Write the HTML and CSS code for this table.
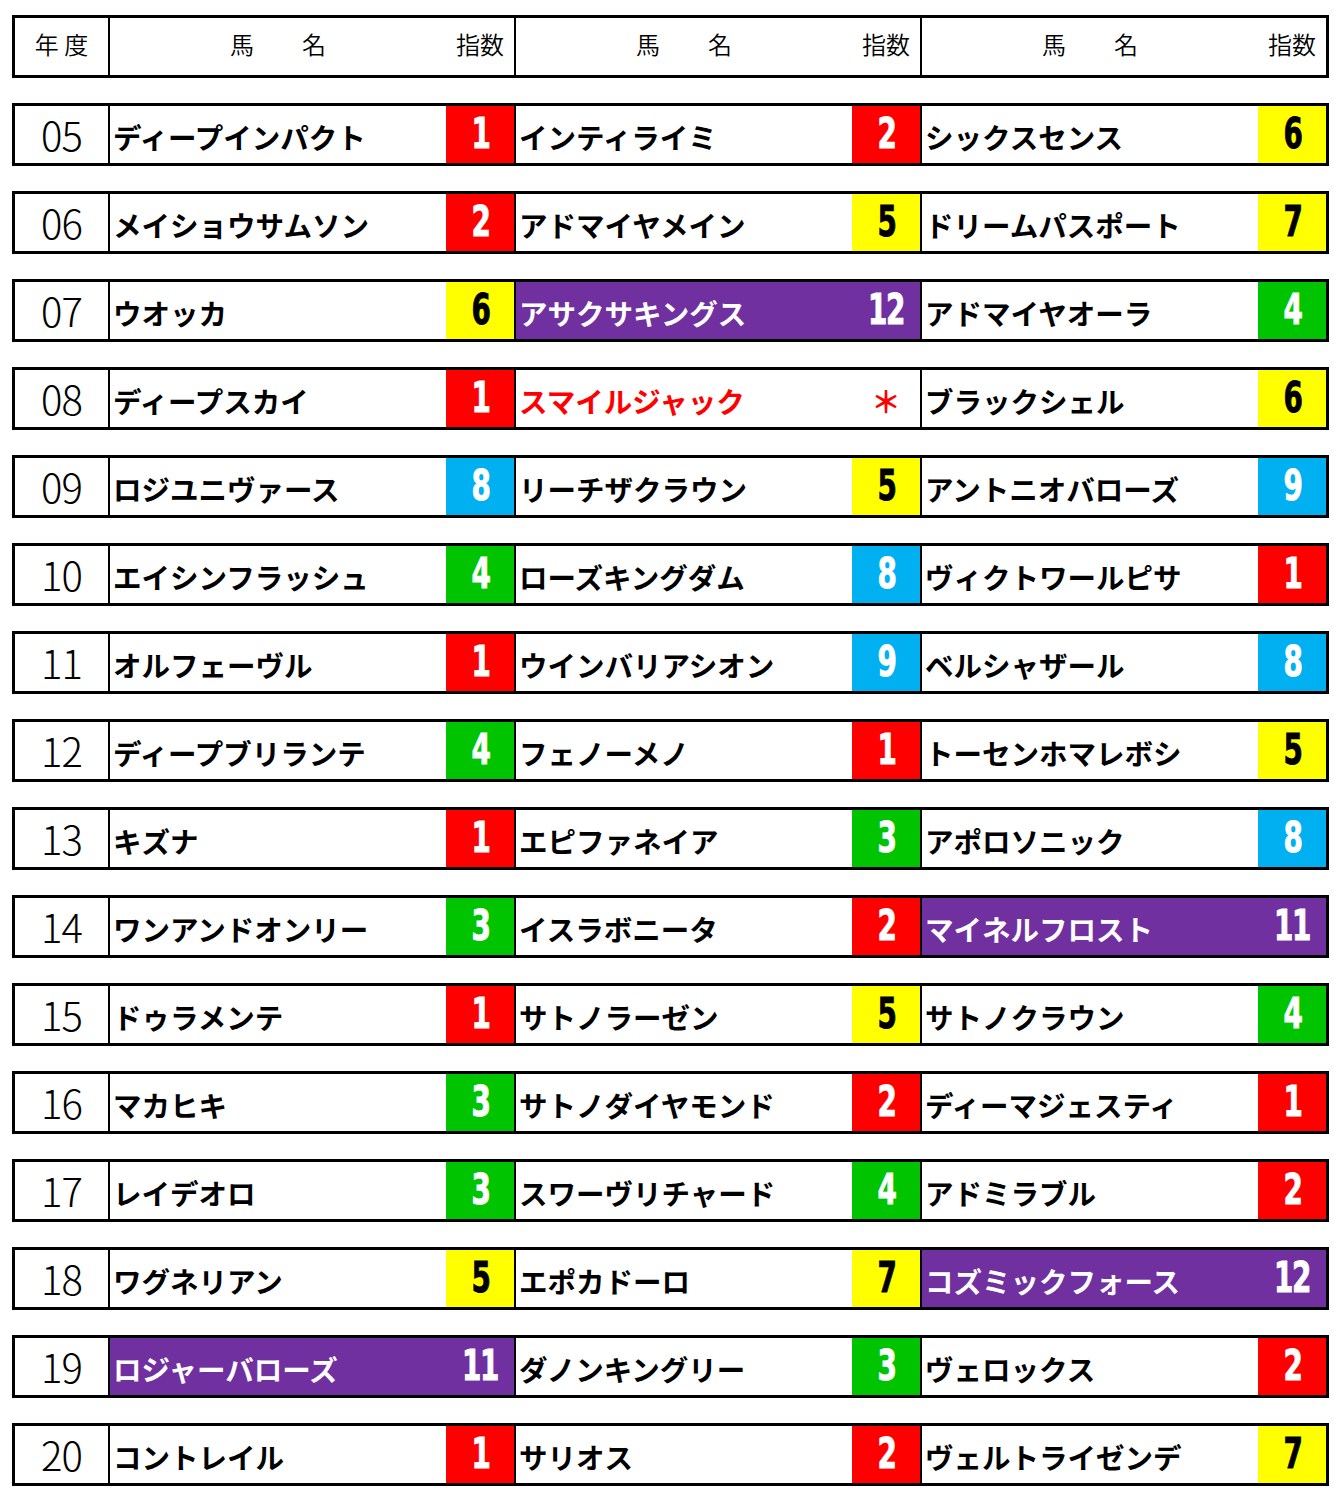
FILE: index.html
```html
<!DOCTYPE html>
<html lang="ja">
<head>
<meta charset="utf-8">
<title>指数</title>
<link rel="stylesheet" href="styles.css">
</head>
<body>
<div class="table" id="table">
  <div class="row head">
    <div class="year">年 度</div>
    <div class="grp"><div class="name">馬　　名</div><div class="idx">指数</div></div>
    <div class="grp"><div class="name">馬　　名</div><div class="idx">指数</div></div>
    <div class="grp"><div class="name">馬　　名</div><div class="idx">指数</div></div>
  </div>
</div>
<script src="script.js"></script>
</body>
</html>
```

FILE: script.js
```js
var data = [
  ["05", ["ディープインパクト","1","r"], ["インティライミ","2","r"], ["シックスセンス","6","y"]],
  ["06", ["メイショウサムソン","2","r"], ["アドマイヤメイン","5","y"], ["ドリームパスポート","7","y"]],
  ["07", ["ウオッカ","6","y"], ["アサクサキングス","12","p"], ["アドマイヤオーラ","4","g"]],
  ["08", ["ディープスカイ","1","r"], ["スマイルジャック","＊","x"], ["ブラックシェル","6","y"]],
  ["09", ["ロジユニヴァース","8","b"], ["リーチザクラウン","5","y"], ["アントニオバローズ","9","b"]],
  ["10", ["エイシンフラッシュ","4","g"], ["ローズキングダム","8","b"], ["ヴィクトワールピサ","1","r"]],
  ["11", ["オルフェーヴル","1","r"], ["ウインバリアシオン","9","b"], ["ベルシャザール","8","b"]],
  ["12", ["ディープブリランテ","4","g"], ["フェノーメノ","1","r"], ["トーセンホマレボシ","5","y"]],
  ["13", ["キズナ","1","r"], ["エピファネイア","3","g"], ["アポロソニック","8","b"]],
  ["14", ["ワンアンドオンリー","3","g"], ["イスラボニータ","2","r"], ["マイネルフロスト","11","p"]],
  ["15", ["ドゥラメンテ","1","r"], ["サトノラーゼン","5","y"], ["サトノクラウン","4","g"]],
  ["16", ["マカヒキ","3","g"], ["サトノダイヤモンド","2","r"], ["ディーマジェスティ","1","r"]],
  ["17", ["レイデオロ","3","g"], ["スワーヴリチャード","4","g"], ["アドミラブル","2","r"]],
  ["18", ["ワグネリアン","5","y"], ["エポカドーロ","7","y"], ["コズミックフォース","12","p"]],
  ["19", ["ロジャーバローズ","11","p"], ["ダノンキングリー","3","g"], ["ヴェロックス","2","r"]],
  ["20", ["コントレイル","1","r"], ["サリオス","2","r"], ["ヴェルトライゼンデ","7","y"]]
];
var table = document.getElementById("table");
data.forEach(function (d) {
  var row = document.createElement("div");
  row.className = "row";
  var y = document.createElement("div");
  y.className = "year num";
  y.textContent = d[0];
  row.appendChild(y);
  for (var i = 1; i < 4; i++) {
    var g = document.createElement("div");
    g.className = "grp c-" + d[i][2];
    var n = document.createElement("div");
    n.className = "name";
    n.textContent = d[i][0];
    var x = document.createElement("div");
    x.className = "idx";
    var s = document.createElement("span");
    s.className = "digits";
    s.textContent = d[i][1];
    x.appendChild(s);
    g.appendChild(n);
    g.appendChild(x);
    row.appendChild(g);
  }
  table.appendChild(row);
});
```

FILE: styles.css
```css
html, body {
  margin: 0;
  padding: 0;
  background: #fff;
}
body {
  padding: 15px 0 0 12px;
  font-family: "Noto Sans CJK JP", "Noto Sans", sans-serif;
  color: #000;
}
.table {
  display: flex;
  flex-direction: column;
  gap: 25px;
  width: 1317px;
}
.row {
  display: grid;
  grid-template-columns: 93px 406px 406px 406px;
  grid-template-rows: 57px;
  height: 57px;
  border: 3px solid #000;
  line-height: 1;
}
.year {
  display: flex;
  align-items: center;
  justify-content: center;
  font-weight: 300;
}
.head .year {
  font-size: 24px;
  padding-bottom: 6px;
  font-weight: 350;
}
.year.num {
  font-size: 40px;
  font-weight: 300;
  letter-spacing: -1px;
  padding-bottom: 2px;
}
.grp {
  display: grid;
  grid-template-columns: 336px 68px;
  grid-template-rows: 57px;
  border-left: 2px solid #000;
}
.name {
  display: flex;
  align-items: center;
  padding-left: 3px;
  font-size: 28.5px;
  font-weight: 700;
  white-space: nowrap;
  padding-top: 5px;
}
.idx {
  display: flex;
  align-items: center;
  justify-content: center;
}
.digits {
  display: inline-block;
  font-family: "DejaVu Sans Condensed", "DejaVu Sans", sans-serif;
  font-weight: 700;
  font-size: 43px;
  line-height: 1;
  transform: scaleX(0.72);
  -webkit-text-stroke: 0.9px currentColor;
  letter-spacing: -2px;
  margin-bottom: 2px;
}
.head .name {
  justify-content: center;
  padding: 0 0 6px 0;
  font-size: 24px;
  font-weight: 350;
}
.head .idx {
  font-size: 24px;
  font-weight: 350;
  padding-bottom: 6px;
}
.c-r .idx { background: #ff0000; color: #fff; }
.c-y .idx { background: #ffff00; color: #000; }
.c-g .idx { background: #00c400; color: #fff; }
.c-b .idx { background: #00b0f0; color: #fff; }
.c-p { background: #7030a0; color: #fff; }
.c-x .name, .c-x .idx { color: #ff0000; }
.c-x .digits {
  font-family: "Noto Sans CJK JP", sans-serif;
  font-size: 30px;
  font-weight: 700;
  transform: none;
  letter-spacing: 0;
  -webkit-text-stroke: 0;
  margin: 3px 0 0 0;
}
```
